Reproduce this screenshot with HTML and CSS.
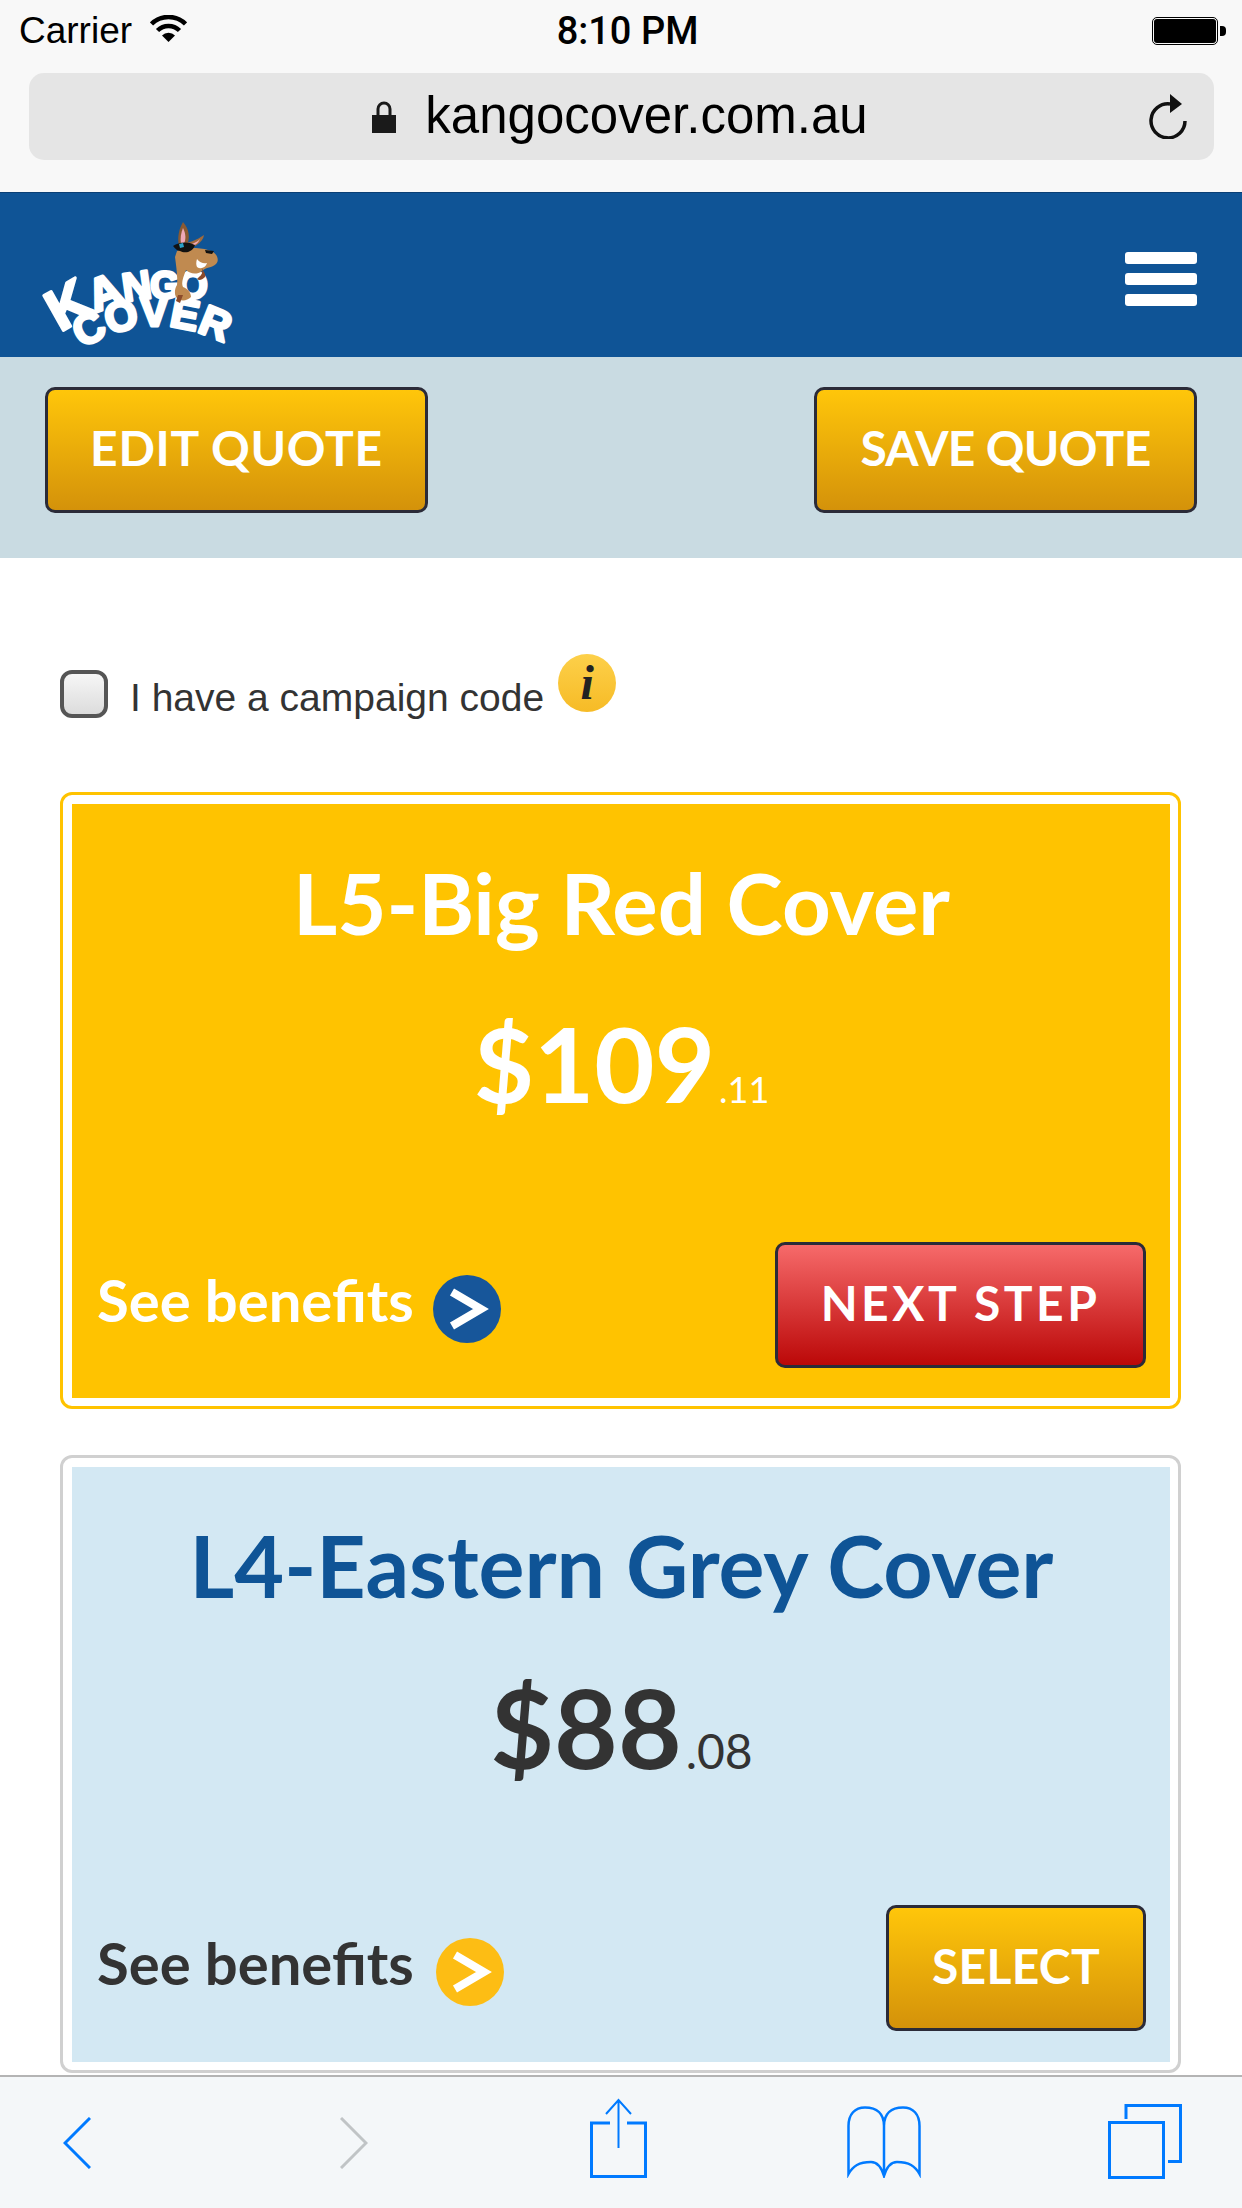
FILE: index.html
```html
<!DOCTYPE html>
<html lang="en">
<head>
<meta charset="utf-8">
<title>KangoCover</title>
<link rel="stylesheet" href="styles.css">
</head>
<body>
<div class="phone">
  <div class="browser-top">
    <div class="status">
      <div class="status-left">
        <span class="carrier">Carrier</span>
        <svg class="wifi" viewBox="0 0 37 27"><path d="M1.5 9A24 24 0 0 1 35.500 9M7.500 15.500A15.500 15.500 0 0 1 29.500 15.500" fill="none" stroke="#000" stroke-width="4.500"/><path d="M18.500 27L12 20.500A9 9 0 0 1 25 20.500Z" fill="#000"/></svg>
      </div>
      <span class="time">8:10 PM</span>
      <div class="status-right"><span class="battery"><span class="battery-fill"></span></span><span class="battery-nub"></span></div>
    </div>
    <div class="urlbar">
      <svg class="lock" viewBox="0 0 24 33"><path d="M6 17V9a6 6 0 0 1 12 0v8" fill="none" stroke="#1a1a1a" stroke-width="3"/><rect y="15" width="24" height="18" fill="#1a1a1a"/></svg>
      <span class="url">kangocover.com.au</span>
      <svg class="reload" viewBox="0 0 40 46"><path d="M22 11A17 17 0 1 0 37 28" fill="none" stroke="#111" stroke-width="3.500"/><path d="M22 1L34 11L22 20Z" fill="#111"/></svg>
    </div>
  </div>

  <div class="page">
    <header class="site-header">
      <svg class="logo" viewBox="0 0 210 140">
        <path id="kango-arc" d="M30 118Q80 86 115 84T205 84" fill="none"/>
        <path id="cover-arc" d="M52 134Q125 88 205 134" fill="none"/>
        <text class="logo-text"><textPath href="#kango-arc"><tspan font-size="58">K</tspan><tspan font-size="46">A</tspan><tspan font-size="40">N</tspan><tspan font-size="38">G</tspan><tspan font-size="38">O</tspan></textPath></text>
        <text class="logo-text logo-cover"><textPath href="#cover-arc">COVER</textPath></text>
        <path d="M153 7C159 14 161 23 156 32L149 32C147 22 149 14 153 7Z" fill="#8a5a32"/>
        <path d="M153 13C156 19 156 24 154 29L151 29C150 23 151 18 153 13Z" fill="#f0a8b8"/>
        <path d="M174 20C173 28 163 34 149 35L149 30C158 28 167 25 174 20Z" fill="#a06a3c"/>
        <path d="M170 24C166 28 160 30 153 31L153 33C160 33 168 30 170 24Z" fill="#f0a8b8"/>
        <path d="M147 36C155 31 170 33 178 35C187 37 190 45 186 49C182 53 176 52 172 56C167 60 160 59 156 55C153 63 151 68 153 72C158 74 161 78 161 82C156 87 149 86 146 82C144 78 145 73 147 70C148 62 146 50 145 42Z" fill="#c08a50"/>
        <path d="M167 44C170 48 174 49 177 48C176 52 171 55 167 52C166 50 166 47 167 44Z" fill="#fff"/>
        <path d="M143 31C149 27 157 26 165 30C163 37 155 39 150 36C147 36 145 33 143 31Z" fill="#111"/>
        <path d="M149 29L153 28L154 32L150 33Z" fill="#2aa0c8"/>
        <path d="M175 35L184 36L182 39L176 38Z" fill="#111"/>
        <path d="M169 62C172 60 173 57 172 53L175 59L175 62C172 65 169 66 167 64Z" fill="#8a4a2a"/>
        <path d="M148 80L153 80L150 88L146 86Z" fill="#8a4a2a"/>
      </svg>
      <button class="menu" aria-label="Menu"><span class="menu-bar"></span><span class="menu-bar"></span><span class="menu-bar"></span></button>
    </header>

    <div class="actions">
      <a class="btn btn-gold btn-wide">EDIT QUOTE</a>
      <a class="btn btn-gold btn-wide btn-save">SAVE QUOTE</a>
    </div>

    <main class="content">
      <div class="campaign">
        <input class="check" type="checkbox">
        <label class="campaign-label">I have a campaign code</label>
        <span class="info">i</span>
      </div>

      <section class="plan plan-active">
        <div class="plan-inner">
          <h2 class="plan-name">L5-Big Red Cover</h2>
          <div class="plan-price">$109<span class="cents">.11</span></div>
          <div class="plan-foot">
            <a class="benefits">See benefits
              <svg class="go" viewBox="0 0 70 70"><circle cx="35" cy="35" r="34" fill="#17569a"/><path d="M20 18L49 35L20 52" fill="none" stroke="#fff" stroke-width="8"/></svg>
            </a>
            <a class="btn btn-red btn-next">NEXT STEP</a>
          </div>
        </div>
      </section>

      <section class="plan plan-alt">
        <div class="plan-inner">
          <h2 class="plan-name">L4-Eastern Grey Cover</h2>
          <div class="plan-price">$88<span class="cents">.08</span></div>
          <div class="plan-foot">
            <a class="benefits">See benefits
              <svg class="go" viewBox="0 0 70 70"><circle cx="35" cy="35" r="34" fill="#fdbd14"/><path d="M20 18L49 35L20 52" fill="none" stroke="#fff" stroke-width="8"/></svg>
            </a>
            <a class="btn btn-gold btn-select">SELECT</a>
          </div>
        </div>
      </section>
    </main>
  </div>

  <nav class="toolbar">
    <svg class="tool tool-back" viewBox="0 0 28 52"><path d="M27 1L2 26L27 51" fill="none" stroke="#007aff" stroke-width="3"/></svg>
    <svg class="tool tool-forward" viewBox="0 0 28 52"><path d="M1 1L26 26L1 51" fill="none" stroke="#c0c4c6" stroke-width="3"/></svg>
    <svg class="tool tool-share" viewBox="0 0 57 80"><path d="M20 25H1.500V78.500H55.500V25H37" fill="none" stroke="#007aff" stroke-width="3"/><path d="M28.500 2V50M16 16L28.500 2L41 16" fill="none" stroke="#007aff" stroke-width="2"/></svg>
    <svg class="tool tool-book" viewBox="0 0 74 72"><path d="M37 70C34 60 30 56 24 56C12 56 6 60 1.500 68V20C1.500 8 8 1.500 18 1.500C30 1.500 37 8 37 20C37 8 44 1.500 56 1.500C66 1.500 72.500 8 72.500 20V68C68 60 62 56 50 56C44 56 40 60 37 70ZM37 20V70" fill="none" stroke="#007aff" stroke-width="2.500"/></svg>
    <svg class="tool tool-tabs" viewBox="0 0 74 75"><path d="M18 15V1.500H72.500V57.500H60" fill="none" stroke="#007aff" stroke-width="3"/><rect x="1.500" y="18.500" width="54" height="55" fill="none" stroke="#007aff" stroke-width="3"/></svg>
  </nav>
</div>
</body>
</html>
```
FILE: styles.css
```css
* { box-sizing: border-box; }
html, body { margin: 0; padding: 0; background: #fff; }
.phone {
  width: 1242px;
  height: 2208px;
  display: flex;
  flex-direction: column;
  overflow: hidden;
  font-family: "Liberation Sans", Arial, sans-serif;
}

/* browser chrome */
.browser-top { height: 192px; background: #f8f8f8; flex: none; padding-top: 13px; }
.status {
  display: grid;
  grid-template-columns: 1fr auto 1fr;
  align-items: center;
  height: 36px;
  padding: 0 16px 0 19px;
  color: #000;
}
.status-left { display: flex; align-items: center; gap: 18px; }
.carrier { font-size: 37px; line-height: 36px; }
.wifi { width: 37px; height: 27px; margin-top: -6px; }
.time { font-family: Roboto, sans-serif; font-weight: 500; font-size: 38px; line-height: 36px; margin-left: 10px; }
.status-right { display: flex; align-items: center; justify-content: flex-end; gap: 2px; }
.battery { width: 66px; height: 28px; border: 1px solid #000; border-radius: 5px; padding: 1px; display: block; }
.battery-fill { display: block; width: 100%; height: 100%; background: #000; border-radius: 3px; }
.battery-nub { width: 6px; height: 10px; background: #000; border-radius: 0 4px 4px 0; }
.urlbar {
  position: relative;
  margin: 24px 28px 0 29px;
  height: 87px;
  border-radius: 15px;
  background: #e5e5e5;
  display: flex;
  align-items: center;
  justify-content: center;
  gap: 29px;
}
.lock { width: 24px; height: 33px; margin-left: -3px; }
.url { font-size: 51px; line-height: 60px; color: #000; margin-top: -2px; }
.reload { position: absolute; left: 1119px; top: 20px; width: 40px; height: 46px; }

/* page */
.page { flex: 1; min-height: 0; overflow: hidden; font-family: Lato, sans-serif; }
.site-header {
  height: 165px;
  background: #0f5496;
  border-top: 1px solid #0a3f75;
  padding: 22px 45px 0 30px;
  display: flex;
  justify-content: space-between;
  align-items: flex-start;
}
.logo { width: 210px; height: 140px; display: block; }
.logo-text {
  font-family: "Liberation Sans", Arial, sans-serif;
  font-weight: 700;
  fill: #fff;
  stroke: #fff;
  stroke-width: 3px;
  stroke-linejoin: round;
  letter-spacing: -2px;
}
.logo-cover { font-size: 42px; letter-spacing: 0; }
.menu {
  background: none;
  border: 0;
  padding: 0;
  margin-top: 37px;
  width: 72px;
  display: flex;
  flex-direction: column;
  gap: 9px;
}
.menu-bar { display: block; height: 12px; background: #fff; border-radius: 3px; }

.actions {
  height: 201px;
  background: #c9dbe2;
  padding: 30px 45px;
  display: flex;
  justify-content: space-between;
  align-items: flex-start;
}
.btn {
  height: 126px;
  padding-bottom: 6px;
  display: flex;
  align-items: center;
  justify-content: center;
  border: 3px solid #2b2b38;
  border-radius: 10px;
  color: #fff;
  font-weight: 700;
  font-size: 48px;
  letter-spacing: 0.7px;
}
.btn-gold { background: linear-gradient(#ffc60a, #d4920a); }
.btn-red { background: linear-gradient(#f66a6a, #bb0808); }
.btn-wide { width: 383px; }
.btn-save { letter-spacing: -0.7px; }
.btn-next { width: 371px; letter-spacing: 3.5px; }
.btn-select { width: 260px; letter-spacing: 0.3px; }

.content { padding: 96px 61px 0 60px; }
.campaign { display: flex; align-items: flex-start; height: 138px; }
.check {
  appearance: none;
  -webkit-appearance: none;
  width: 48px;
  height: 48px;
  margin: 16px 0 0;
  border: 4px solid #555;
  border-radius: 12px;
  background: linear-gradient(#f6f6f6, #dcdcdc);
}
.campaign-label { margin: 21px 0 0 22px; font-family: "Liberation Sans", Arial, sans-serif; font-size: 39px; line-height: 46px; color: #333; }
.info {
  width: 58px;
  height: 58px;
  margin-left: 14px;
  border-radius: 50%;
  background: linear-gradient(#fdd04a, #f6bb26);
  color: #222;
  font-family: "Liberation Serif", serif;
  font-style: italic;
  font-weight: 700;
  font-size: 48px;
  line-height: 58px;
  text-align: center;
}

.plan { height: 617px; border: 3px solid; border-radius: 12px; padding: 9px 8px 8px 9px; margin-bottom: 46px; }
.plan-inner { height: 100%; padding: 48px 24px 30px 25px; }
.plan-active { border-color: #ffc300; }
.plan-active .plan-inner { background: #ffc300; color: #fff; }
.plan-alt { height: 618px; border-color: #d0d0d0; }
.plan-alt .plan-inner { background: #d3e8f3; color: #333; }
.plan-name { margin: 0; text-align: center; font-size: 85px; line-height: 100px; font-weight: 700; }
.plan-alt .plan-name { color: #0f5496; font-size: 86px; }
.plan-price { margin-top: 56px; text-align: center; font-size: 104px; line-height: 110px; font-weight: 700; }
.plan-alt .plan-price { font-size: 110px; }
.cents { font-size: 36px; font-weight: 400; line-height: 1; margin-left: 4px; }
.plan-alt .cents { font-size: 48px; }
.plan-foot { margin-top: 124px; display: flex; justify-content: space-between; align-items: center; }
.benefits { display: flex; align-items: center; gap: 18px; margin-bottom: 10px; font-size: 58px; font-weight: 700; line-height: 70px; }
.go { width: 70px; height: 70px; margin-top: 18px; }
.plan-alt .go { margin-left: 3px; }

/* browser toolbar */
.toolbar {
  height: 133px;
  flex: none;
  background: #f4f7f9;
  border-top: 2px solid #b4b4b4;
  padding-left: 63px;
  display: flex;
  position: relative;
}
.tool { display: block; flex: none; }
.tool-back { width: 28px; height: 52px; margin-top: 40px; }
.tool-forward { width: 28px; height: 52px; margin: 40px 0 0 249px; }
.tool-share { width: 57px; height: 80px; margin: 21px 0 0 222px; }
.tool-book { width: 74px; height: 72px; margin: 29px 0 0 200px; }
.tool-tabs { width: 74px; height: 75px; margin: 27px 0 0 187px; }
```
